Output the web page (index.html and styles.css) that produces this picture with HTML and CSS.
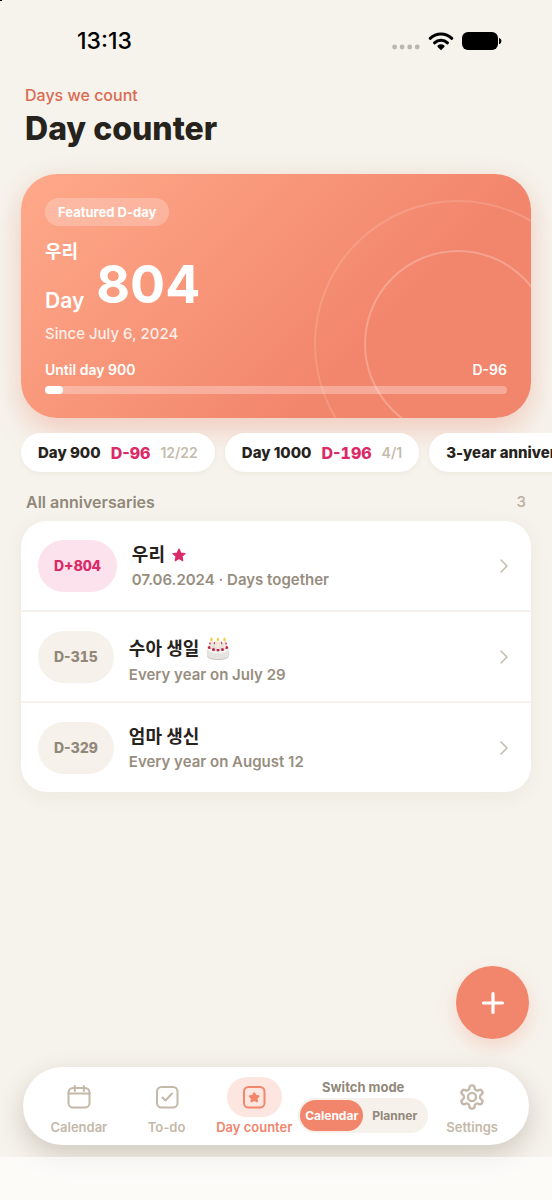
FILE: index.html
```html
<!DOCTYPE html>
<html lang="en">
<head>
<meta charset="utf-8">
<meta name="viewport" content="width=device-width, initial-scale=1">
<title>Day counter</title>
<link rel="stylesheet" href="styles.css">
</head>
<body>
<div class="screen">
  <div class="status">
    <time class="clock">13:13</time>
    <div class="signals">
      <svg width="28" height="6" viewBox="0 0 28 6" fill="#b9b6b0" aria-hidden="true"><circle cx="2.6" cy="3" r="2.4"/><circle cx="10.1" cy="3" r="2.4"/><circle cx="17.7" cy="3" r="2.4"/><circle cx="25.2" cy="3" r="2.4"/></svg>
      <svg width="26" height="20" viewBox="0 0 26 20" fill="none" stroke="#000" stroke-width="3" stroke-linecap="round" aria-hidden="true"><path d="M2.2 7.300a15.600 15.600 0 0 1 21.600 0"/><path d="M6.500 11.800a9.400 9.400 0 0 1 13 0"/><path d="M13 19.200l-3.300-3.300a1 1 0 0 1 0-1.400c1.800-1.600 4.800-1.600 6.600 0a1 1 0 0 1 0 1.400z" fill="#000" stroke="none"/></svg>
      <svg width="40" height="18" viewBox="0 0 40 18" aria-hidden="true"><rect width="36" height="18" rx="6"/><path d="M37 6c3.200 .6 3.200 5.600 0 6.200z"/></svg>
    </div>
  </div>

  <header class="heading">
    <p class="eyebrow">Days we count</p>
    <h1 class="title">Day counter</h1>
  </header>

  <main class="content">
    <section class="hero">
      <svg class="rings" width="288" height="288" viewBox="0 0 288 288" fill="none" stroke="#fff" stroke-width="2" aria-hidden="true"><circle cx="144" cy="144" r="143" stroke-opacity=".14"/><circle cx="144" cy="144" r="93" stroke-opacity=".24"/></svg>
      <span class="tag">Featured D-day</span>
      <h2 class="hero-name" lang="ko">우리</h2>
      <p class="count"><span class="unit">Day</span><strong class="number">804</strong></p>
      <p class="since">Since July 6, 2024</p>
      <div class="goal"><span>Until day 900</span><span>D-96</span></div>
      <div class="track"><div class="fill"></div></div>
    </section>

    <ul class="chips">
      <li class="chip"><b>Day 900</b><b class="left">D-<span class="digits">96</span></b><span class="date">12/22</span></li>
      <li class="chip"><b>Day 1000</b><b class="left">D-<span class="digits">196</span></b><span class="date">4/1</span></li>
      <li class="chip"><b>3-year anniversary</b></li>
    </ul>

    <div class="section-head"><h2 class="section-title">All anniversaries</h2><span class="total">3</span></div>

    <ul class="list">
      <li><a class="row" href="#">
        <span class="badge badge-pink">D+<span class="digits">804</span></span>
        <span class="info"><span class="name" lang="ko">우리
          <svg width="14" height="14" viewBox="0 0 24 24" fill="#db2a68" stroke="#db2a68" stroke-width="2" stroke-linejoin="round" aria-hidden="true"><path d="M12 1.800l3.100 6.700 7.300.900-5.400 5 1.400 7.300L12 18.100l-6.400 3.600L7 14.400l-5.400-5 7.300-.900z"/></svg></span>
          <span class="note">07.06.2024 · Days together</span></span>
        <svg class="chevron" width="10" height="16" viewBox="0 0 10 16" aria-hidden="true"><path d="M2 2l6 6-6 6"/></svg>
      </a></li>
      <li><a class="row" href="#">
        <span class="badge">D-<span class="digits">315</span></span>
        <span class="info"><span class="name name-emoji" lang="ko">수아 생일
          <svg width="24" height="24" viewBox="0 0 24 24" aria-hidden="true"><path d="M1.200 12v7c0 5.300 21.600 5.300 21.600 0v-7z" fill="#c9c7c3"/><path d="M1.200 12v6c0 5.300 21.600 5.300 21.600 0v-6z" fill="#e6e4e1"/><ellipse cx="12" cy="11.500" rx="10.800" ry="5" fill="#f4f2ef"/><ellipse cx="12" cy="9.500" rx="9" ry="4.500" fill="#e2ddd8"/><g fill="#bd2449"><circle cx="3.300" cy="10.500" r="1.500"/><circle cx="7.500" cy="12.500" r="1.500"/><circle cx="12" cy="13" r="1.500"/><circle cx="16.500" cy="12.500" r="1.500"/><circle cx="20.700" cy="10.500" r="1.500"/><circle cx="4.500" cy="6.500" r="1.300"/><circle cx="9" cy="6" r="1.300"/><circle cx="15" cy="6" r="1.300"/><circle cx="19.500" cy="6.500" r="1.300"/></g><path d="M5.500 4v7M9.800 4v6M14.200 4v6M18.500 4v7M12 5v7" stroke="#f4e9dc" stroke-width="2"/><g fill="#f3cf4a"><ellipse cx="5.500" cy="2.500" rx="1.200" ry="2"/><ellipse cx="12" cy="2.500" rx="1.200" ry="2"/><ellipse cx="18.500" cy="2.500" rx="1.200" ry="2"/></g></svg></span>
          <span class="note">Every year on July 29</span></span>
        <svg class="chevron" width="10" height="16" viewBox="0 0 10 16" aria-hidden="true"><path d="M2 2l6 6-6 6"/></svg>
      </a></li>
      <li><a class="row" href="#">
        <span class="badge">D-<span class="digits">329</span></span>
        <span class="info"><span class="name" lang="ko">엄마 생신</span>
          <span class="note">Every year on August 12</span></span>
        <svg class="chevron" width="10" height="16" viewBox="0 0 10 16" aria-hidden="true"><path d="M2 2l6 6-6 6"/></svg>
      </a></li>
    </ul>
  </main>

  <div class="dock">
    <button class="add" type="button" aria-label="Add anniversary"><svg width="24" height="24" viewBox="0 0 24 24" fill="none" stroke="#fff" stroke-width="3.200" stroke-linecap="round" aria-hidden="true"><path d="M12 2.500v19M2.500 12h19"/></svg></button>
    <nav class="tabs">
      <a class="tab" href="#"><span class="tab-icon"><svg width="26" height="26" viewBox="0 0 26 26" aria-hidden="true"><rect x="2.500" y="4" width="21" height="19.500" rx="4.500"/><path d="M2.500 9.500h21M8.800 2v5M17.800 2v5"/></svg></span>Calendar</a>
      <a class="tab" href="#"><span class="tab-icon"><svg width="26" height="26" viewBox="0 0 26 26" aria-hidden="true"><rect x="3" y="3" width="20.500" height="20.500" rx="4.500"/><path d="M8.500 13.500l3 3 6.500-7"/></svg></span>To-do</a>
      <a class="tab tab-active" href="#" aria-current="page"><span class="tab-icon"><svg width="26" height="26" viewBox="0 0 26 26" aria-hidden="true"><rect x="3" y="3" width="20.500" height="20.500" rx="4.500"/><path d="M13.200 9.200l1.400 2.600 3 .400-2.200 2.100.600 3-2.800-1.400-2.800 1.400.600-3-2.200-2.100 3-.400z" fill="currentColor"/></svg></span>Day counter</a>
      <div class="mode" role="group" aria-labelledby="mode-label">
        <span class="mode-label" id="mode-label">Switch mode</span>
        <div class="switch"><button class="option option-on" type="button" aria-pressed="true">Calendar</button><button class="option" type="button" aria-pressed="false">Planner</button></div>
      </div>
      <a class="tab" href="#"><span class="tab-icon"><svg width="28" height="28" viewBox="0 0 24 24" aria-hidden="true"><path d="M12.220 2h-.440a2 2 0 0 0-2 2v.180a2 2 0 0 1-1 1.730l-.430.250a2 2 0 0 1-2 0l-.150-.080a2 2 0 0 0-2.730.730l-.220.380a2 2 0 0 0 .730 2.730l.150.100a2 2 0 0 1 1 1.720v.510a2 2 0 0 1-1 1.740l-.150.090a2 2 0 0 0-.730 2.730l.220.380a2 2 0 0 0 2.730.730l.150-.080a2 2 0 0 1 2 0l.430.250a2 2 0 0 1 1 1.730V20a2 2 0 0 0 2 2h.440a2 2 0 0 0 2-2v-.180a2 2 0 0 1 1-1.730l.430-.250a2 2 0 0 1 2 0l.150.080a2 2 0 0 0 2.730-.730l.220-.390a2 2 0 0 0-.730-2.730l-.150-.080a2 2 0 0 1-1-1.740v-.500a2 2 0 0 1 1-1.740l.150-.090a2 2 0 0 0 .730-2.730l-.220-.380a2 2 0 0 0-2.730-.730l-.150.080a2 2 0 0 1-2 0l-.430-.250a2 2 0 0 1-1-1.730V4a2 2 0 0 0-2-2z"/><circle cx="12" cy="12" r="3.500"/></svg></span>Settings</a>
    </nav>
  </div>
  <div class="home-strip"></div>
</div>
</body>
</html>
```
FILE: styles.css
```css
* { box-sizing: border-box; margin: 0; padding: 0; }

body {
  background: #f6f3ec;
  color: #26221c;
  font-family: Inter, "Noto Sans CJK KR", sans-serif;
  font-size: 15px;
}

ul { list-style: none; }
a { color: inherit; text-decoration: none; }
button { border: 0; font: inherit; color: inherit; cursor: pointer; }
svg { display: block; flex: none; }

.screen {
  display: flex;
  flex-direction: column;
  min-height: 100vh;
  overflow: hidden;
  position: relative;
}

.screen::before {
  content: "";
  position: absolute;
  width: 2px;
  height: 1px;
  background: #000;
}

.digits { font-variant-numeric: tabular-nums; }

.status {
  display: flex;
  justify-content: space-between;
  align-items: center;
  height: 82px;
  padding: 0 50px 0 77px;
}
.clock { font-size: 23px; font-weight: 500; color: #000; }
.signals { display: flex; align-items: center; gap: 8px; }
.signals svg:first-child { margin-top: 12px; }

.heading { padding: 2px 25px 0; }
.eyebrow { color: #dc6a51; font-size: 16px; font-weight: 500; line-height: 22px; }
.title { font-size: 32px; font-weight: 800; line-height: 46px; }

.content { flex: 1; position: relative; padding: 22px 21px; }

.hero {
  position: relative;
  overflow: hidden;
  padding: 24px;
  border-radius: 36px;
  background: linear-gradient(135deg, #ffa98a 0%, #f2866c 68%, #f2866c 100%);
  box-shadow: 0 14px 28px rgba(242, 134, 108, .3), 0 0 24px rgba(150, 110, 80, .07);
  color: #fff;
}
.rings { position: absolute; right: -71px; top: 26px; }
.hero > :not(.rings) { position: relative; }
.tag {
  display: inline-block;
  padding: 0 13px;
  border-radius: 14px;
  background: rgba(255, 255, 255, .24);
  font-size: 13px;
  font-weight: 700;
  line-height: 28px;
  vertical-align: top;
}
.hero-name { margin-top: 13px; font-size: 18px; font-weight: 600; line-height: 26px; }
.count { display: flex; align-items: flex-end; gap: 12px; height: 50px; }
.unit { font-size: 21px; font-weight: 600; line-height: 28px; }
.number { font-size: 52px; font-weight: 700; line-height: 60px; }
.since { margin-top: 7px; font-weight: 500; line-height: 24px; color: rgba(255, 255, 255, .85); }
.goal { display: flex; justify-content: space-between; margin-top: 14px; font-size: 14px; font-weight: 600; line-height: 20px; }
.track { margin-top: 6px; height: 8px; border-radius: 4px; background: rgba(255, 255, 255, .3); }
.fill { width: 4%; height: 8px; border-radius: 4px; background: #fff; }

.chips {
  display: flex;
  gap: 10px;
  margin: 15px -21px 0;
  padding: 0 21px 6px;
  overflow-x: auto;
  scrollbar-width: none;
  position: relative;
}
.chip {
  display: flex;
  flex: none;
  align-items: center;
  gap: 10px;
  height: 39px;
  padding: 0 17px;
  border-radius: 20px;
  background: #fff;
  box-shadow: 0 2px 4px rgba(90, 70, 40, .05);
}
.chip b { font-weight: 800; }
.chip .left { color: #db2a68; font-size: 16px; }
.date { color: #c4bbad; font-size: 14px; font-weight: 600; }

.section-head { display: flex; justify-content: space-between; align-items: center; padding: 13px 5px 8px; line-height: 22px; }
.section-title { font-size: 16px; font-weight: 600; color: #91887a; }
.total { color: #b9b0a3; font-weight: 500; }

.list { border-radius: 26px; background: #fff; box-shadow: 0 4px 20px rgba(90, 70, 40, .06); }
.list li + li { border-top: 2px solid #f6f1eb; }
.row { display: flex; align-items: center; gap: 15px; min-height: 89px; padding: 0 22px 0 17px; }
.badge {
  padding: 0 16px;
  border-radius: 26px;
  background: #f6f1eb;
  color: #91887a;
  font-size: 14px;
  font-weight: 800;
  line-height: 52px;
}
.badge-pink { background: #fce2ec; color: #db2a68; }
.info { flex: 1; padding-top: 3px; }
.name { display: flex; align-items: center; gap: 7px; font-size: 18px; font-weight: 700; line-height: 26px; }
.name-emoji { padding-top: 5px; line-height: 28px; }
.note { display: block; font-weight: 600; line-height: 24px; color: #978e80; }
.chevron { fill: none; stroke: #c4bbad; stroke-width: 1.5; stroke-linecap: round; stroke-linejoin: round; }

.dock { position: relative; padding: 0 23px 12px; }
.add {
  position: absolute;
  right: 23px;
  bottom: 118px;
  display: grid;
  place-items: center;
  width: 73px;
  height: 73px;
  border-radius: 50%;
  background: #f2866c;
  box-shadow: 0 8px 18px rgba(242, 134, 108, .26);
}
.tabs {
  display: flex;
  align-items: center;
  justify-content: space-between;
  height: 78px;
  padding: 0 13px 0 12px;
  border-radius: 39px;
  background: #fff;
  box-shadow: 0 10px 26px rgba(90, 70, 50, .24);
}
.tab {
  display: flex;
  flex-direction: column;
  align-items: center;
  flex: 1 0 86px;
  gap: 2px;
  color: #c4b8a8;
  font-size: 13px;
  font-weight: 600;
  line-height: 16px;
}
.tab-icon { display: grid; place-items: center; width: 55px; height: 40px; border-radius: 20px; }
.tab-icon svg { fill: none; stroke: currentColor; stroke-width: 2; stroke-linecap: round; stroke-linejoin: round; }
.tab-active { color: #f2866c; }
.tab-active .tab-icon { background: #fce6df; }
.mode { display: flex; flex-direction: column; align-items: center; gap: 2px; padding-bottom: 2px; }
.mode-label { color: #91887a; font-size: 13px; font-weight: 700; line-height: 18px; }
.switch { display: flex; padding: 2px; border-radius: 18px; background: #f6f1eb; }
.option { height: 31px; padding: 0 9px; border-radius: 16px; background: none; color: #91887a; font-size: 12px; font-weight: 700; }
.option-on { padding: 0 5px; background: #f2866c; color: #fff; }

.home-strip { position: relative; height: 43px; background: rgba(255, 255, 255, .65); }
```
